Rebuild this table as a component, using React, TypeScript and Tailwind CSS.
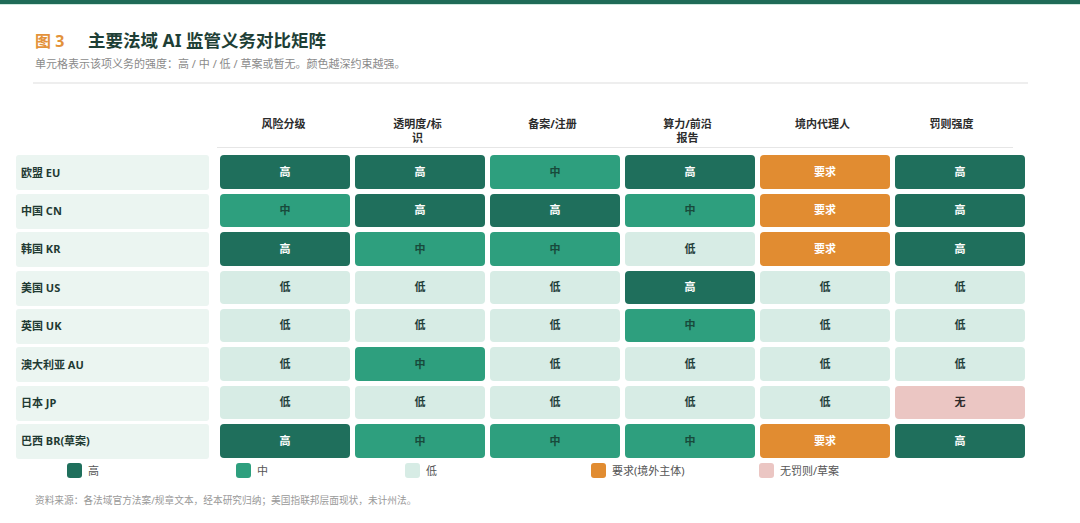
import React from "react";

type Level = "高" | "中" | "低" | "要求" | "无";

const COLUMNS: string[][] = [
  ["风险分级"],
  ["透明度/标", "识"],
  ["备案/注册"],
  ["算力/前沿", "报告"],
  ["境内代理人"],
  ["罚则强度"],
];

const ROWS: { label: string; cells: Level[] }[] = [
  { label: "欧盟 EU", cells: ["高", "高", "中", "高", "要求", "高"] },
  { label: "中国 CN", cells: ["中", "高", "高", "中", "要求", "高"] },
  { label: "韩国 KR", cells: ["高", "中", "中", "低", "要求", "高"] },
  { label: "美国 US", cells: ["低", "低", "低", "高", "低", "低"] },
  { label: "英国 UK", cells: ["低", "低", "低", "中", "低", "低"] },
  { label: "澳大利亚 AU", cells: ["低", "中", "低", "低", "低", "低"] },
  { label: "日本 JP", cells: ["低", "低", "低", "低", "低", "无"] },
  { label: "巴西 BR(草案)", cells: ["高", "中", "中", "中", "要求", "高"] },
];

const CELL_STYLE: Record<Level, string> = {
  高: "bg-[#1f6f5c] text-white",
  中: "bg-[#2e9f7e] text-[#184a3b]",
  低: "bg-[#d7ece5] text-[#24403a]",
  要求: "bg-[#e18c31] text-white",
  无: "bg-[#ebc6c3] text-[#2e2a2a]",
};

const LEGEND: { swatch: string; label: string }[] = [
  { swatch: "bg-[#1f6f5c]", label: "高" },
  { swatch: "bg-[#2e9f7e]", label: "中" },
  { swatch: "bg-[#d7ece5]", label: "低" },
  { swatch: "bg-[#e18c31]", label: "要求(境外主体)" },
  { swatch: "bg-[#ebc6c3]", label: "无罚则/草案" },
];

export default function App() {
  return (
    <div
      className="h-[523px] w-[1080px] overflow-hidden bg-white"
      style={{ fontFamily: '"Noto Sans", "Noto Sans CJK SC", sans-serif' }}
    >
      <div className="h-[5px] border-b border-[#cfe9df] bg-[#1f6b58]" />

      <div className="flex items-baseline pl-[35px] pt-[22px]">
        <span className="w-[53px] text-[16px] font-bold leading-[26px] text-[#e3923a]">图 3</span>
        <h1 className="text-[17.5px] font-bold leading-[26px] text-[#1e3f36]">主要法域 AI 监管义务对比矩阵</h1>
      </div>
      <p className="mt-[2px] pl-[35px] text-[11px] leading-[16px] text-[#8a8a8a]">
        单元格表示该项义务的强度：高 / 中 / 低 / 草案或暂无。颜色越深约束越强。
      </p>
      <div className="ml-[33px] mt-[10px] h-[2px] w-[995px] bg-[#eeeeee]" />

      <div className="ml-[16px] mt-[33px] grid grid-cols-[199px_repeat(6,130px)] auto-rows-[33.4px] gap-x-[5px] gap-y-[5px]">
        <div className="h-[31px]" />
        <div className="col-span-6 -ml-[3px] mb-[4px] grid h-[31px] w-[796px] grid-cols-[133px_135px_135px_135px_135px_123px] items-start border-b border-[#e6e6e6]">
          {COLUMNS.map((lines, i) => (
            <div key={i} className="text-center text-[11px] font-bold leading-[14px] text-[#2c2c2c]">
              {lines.map((l, j) => (
                <div key={j}>{l}</div>
              ))}
            </div>
          ))}
        </div>

        {ROWS.map((row) => (
          <React.Fragment key={row.label}>
            <div className="flex h-[35px] w-[193px] items-center rounded-[3px] bg-[#ebf5f1] pl-[5px] text-[11px] font-bold text-[#1f3a33]">
              {row.label}
            </div>
            {row.cells.map((c, i) => (
              <div
                key={i}
                className={`flex items-center justify-center rounded-[4px] text-[11px] font-bold ${CELL_STYLE[c]}`}
              >
                {c}
              </div>
            ))}
          </React.Fragment>
        ))}
      </div>

      <div className="mt-[5px] grid grid-cols-[169px_169px_186px_168px_auto] pl-[67px]">
        {LEGEND.map((item) => (
          <div key={item.label} className="flex items-center gap-[6px]">
            <span className={`h-[15px] w-[15px] rounded-[3px] ${item.swatch}`} />
            <span className="text-[11px] leading-[15px] text-[#555555]">{item.label}</span>
          </div>
        ))}
      </div>

      <p className="mt-[16px] pl-[35px] text-[9.7px] leading-[14px] text-[#999999]">
        资料来源：各法域官方法案/规章文本，经本研究归纳；美国指联邦层面现状，未计州法。
      </p>
    </div>
  );
}
